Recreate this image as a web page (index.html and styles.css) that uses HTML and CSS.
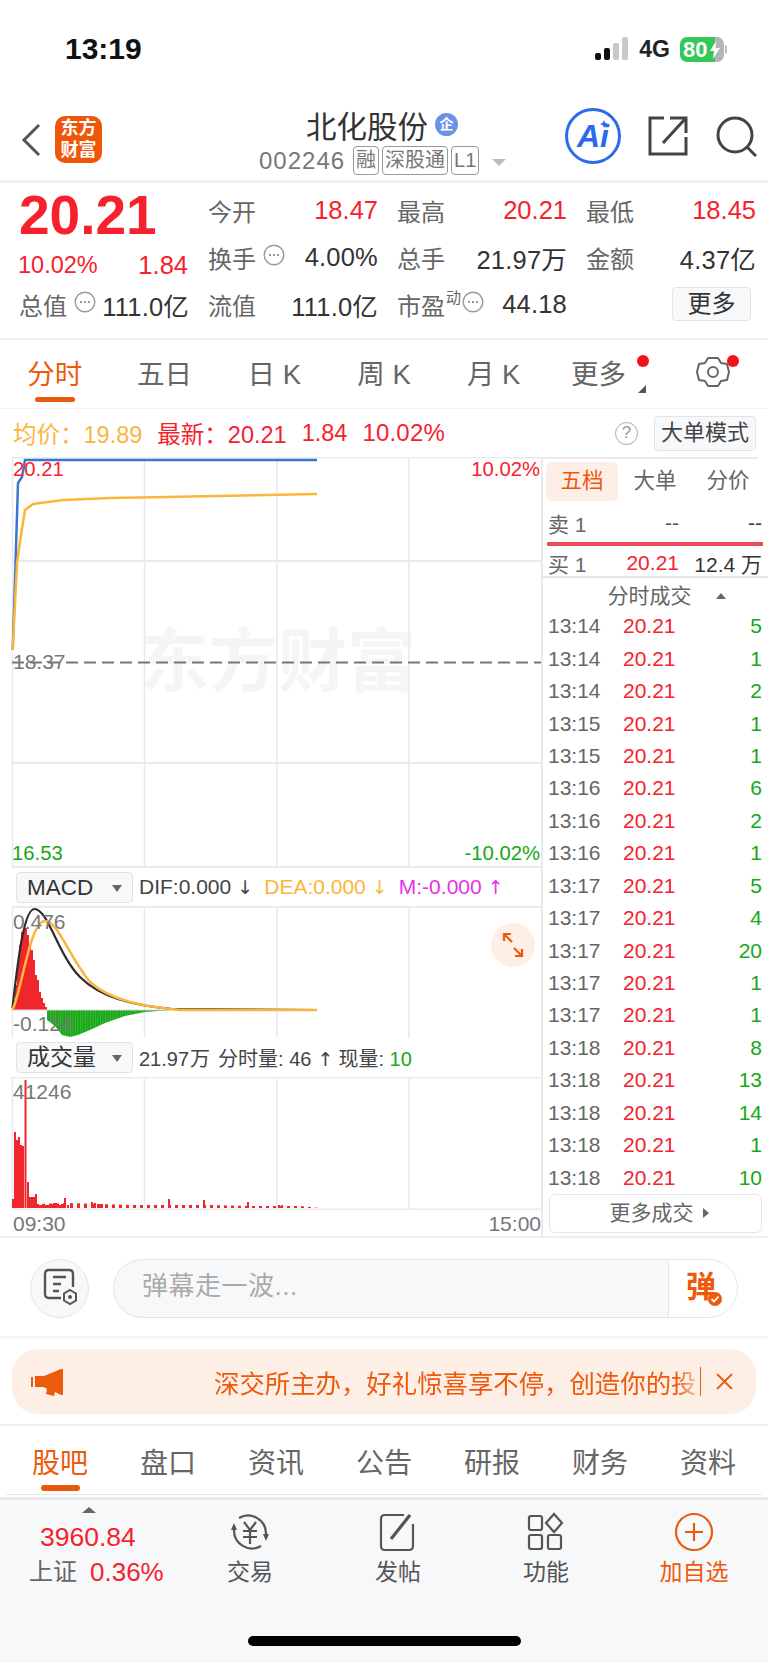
FILE: index.html
```html
<!DOCTYPE html>
<html lang="zh-CN">
<head>
<meta charset="utf-8">
<title>北化股份</title>
<link rel="stylesheet" href="styles.css">
</head>
<body>
<svg class="defs" width="0" height="0" aria-hidden="true">
  <symbol id="more" viewBox="0 0 22 22"><circle cx="11" cy="11" r="9.8" fill="none" stroke="#999" stroke-width="1.4"/><circle cx="7" cy="11" r="1" fill="#777"/><circle cx="11" cy="11" r="1" fill="#777"/><circle cx="15" cy="11" r="1" fill="#777"/></symbol>
  <pattern id="gstripe" width="2.500" height="4" patternUnits="userSpaceOnUse"><rect width="2.500" height="4" fill="#17a717"/><rect width=".6" height="4" fill="#4cbf4c"/></pattern>
  <pattern id="rstripe" width="7" height="4" patternUnits="userSpaceOnUse"><rect width="3" height="4" fill="#f0262d"/></pattern>
</svg>
<div class="page">
  <div class="status">
    <span class="time">13:19</span>
    <div class="status-right">
      <svg class="signal" width="34" height="24" viewBox="0 0 34 24"><rect x="0" y="16" width="6" height="7" rx="2" fill="#111"/><rect x="9" y="11" width="6" height="12" rx="2" fill="#111"/><rect x="18" y="6" width="6" height="17" rx="2" fill="#c8c8c8"/><rect x="27" y="0" width="6" height="23" rx="2" fill="#c8c8c8"/></svg>
      <span class="net">4G</span>
      <div class="battery"><span class="bat-text">80</span><svg class="bolt" width="10" height="18" viewBox="0 0 10 18"><path d="M6 0 0 10h4l-1 8 7-11H5.500z" fill="#fff"/></svg></div>
      <span class="bat-cap"></span>
    </div>
  </div>

  <div class="header">
    <svg class="back" width="20" height="34" viewBox="0 0 20 34"><path d="M18 2 3 17l15 15" fill="none" stroke="#555" stroke-width="3"/></svg>
    <div class="logo"><span>东方</span><span>财富</span></div>
    <div class="title-box">
      <div class="title"><span>北化股份</span><span class="qi">企</span></div>
      <div class="sub"><span class="code">002246</span><span class="tag">融</span><span class="tag">深股通</span><span class="tag">L1</span><span class="tri-down"></span></div>
    </div>
    <div class="ai"><span>Ai</span><svg class="spark" width="8" height="8" viewBox="0 0 8 8"><path d="M4 0 5.200 2.800 8 4 5.200 5.200 4 8 2.800 5.200 0 4 2.800 2.800z" fill="#2b6be8"/></svg></div>
    <svg class="share" width="40" height="40" viewBox="0 0 40 40"><path d="M16 2H2v36h36V21" fill="none" stroke="#444" stroke-width="3"/><path d="M15 27 37 3M22 2h16v15" fill="none" stroke="#444" stroke-width="3"/></svg>
    <svg class="search" width="41" height="41" viewBox="0 0 41 41"><circle cx="19" cy="19" r="17" fill="none" stroke="#444" stroke-width="3"/><path d="m31 31 9 9" stroke="#444" stroke-width="3"/></svg>
  </div>

  <div class="quote">
    <div class="cell price">20.21</div>
    <div class="cell"><span class="lb">今开</span><span class="up">18.47</span></div>
    <div class="cell"><span class="lb">最高</span><span class="up">20.21</span></div>
    <div class="cell"><span class="lb">最低</span><span class="up">18.45</span></div>
    <div class="cell chg"><span class="up chg-pct">10.02%</span><span class="up">1.84</span></div>
    <div class="cell"><span class="lb lbi">换手<svg class="mi"><use href="#more"/></svg></span><span class="val">4.00%</span></div>
    <div class="cell"><span class="lb">总手</span><span class="val">21.97万</span></div>
    <div class="cell"><span class="lb">金额</span><span class="val">4.37亿</span></div>
    <div class="cell"><span class="lb lbi">总值<svg class="mi"><use href="#more"/></svg></span><span class="val">111.0亿</span></div>
    <div class="cell"><span class="lb">流值</span><span class="val">111.0亿</span></div>
    <div class="cell"><span class="lb lbi">市盈<sup class="dyn">动</sup><svg class="mi mi-tight"><use href="#more"/></svg></span><span class="val">44.18</span></div>
    <div class="cell cell-end"><span class="more-btn">更多</span></div>
  </div>

  <div class="period-tabs">
    <div class="ptab on">分时</div>
    <div class="ptab">五日</div>
    <div class="ptab">日 K</div>
    <div class="ptab">周 K</div>
    <div class="ptab">月 K</div>
    <div class="ptab ptab-more">更多<i class="dot dot-a"></i><i class="corner"></i></div>
    <div class="ptab ptab-gear">
      <svg width="34" height="32" viewBox="0 0 34 32"><path d="M12 2h10l3 5 6 1 2 8-2 8-6 1-3 5H12l-3-5-6-1-2-8 2-8 6-1z" fill="none" stroke="#666" stroke-width="2" stroke-linejoin="round"/><circle cx="17" cy="16" r="5" fill="none" stroke="#666" stroke-width="2"/></svg>
      <i class="dot dot-b"></i>
    </div>
  </div>

  <div class="legend">
    <span class="yl">均价：19.89</span>
    <span class="up gap-a">最新：20.21</span>
    <span class="up gap-b">1.84</span>
    <span class="up gap-c">10.02%</span>
    <span class="help">?</span>
    <span class="mode-btn">大单模式</span>
  </div>

  <div class="market">
    <div class="charts">
      <svg class="main-chart" width="541" height="411" viewBox="0 457 541 411">
        <text class="wm" x="140" y="686">东方财富</text>
        <path class="gl" d="M144.500 457V868M277 457V868M409 457V868"/>
        <path class="gh" d="M12 457.500H541M12 561H541M12 763H541M12 867H541"/>
        <path class="gl" d="M12.500 457V868"/>
        <path class="dash" d="M12 662.500H541"/>
        <polyline class="l-blue" points="12.700,650 15,580 18,483 22,477 25,460 317,460"/>
        <polyline class="l-yel" points="12.700,650 17,563 20.700,537 25,510 33,504 63,500 110,498 167,497 317,494"/>
        <text class="t-up" x="13" y="476">20.21</text>
        <text class="t-up t-end" x="540" y="476">10.02%</text>
        <text class="t-gray" x="13" y="669">18.37</text>
        <text class="t-dn" x="12" y="860">16.53</text>
        <text class="t-dn t-end" x="540" y="860">-10.02%</text>
      </svg>
      <div class="ind-row">
        <span class="sel sel-en">MACD<i class="tri-sel"></i></span>
        <span class="ind-a">DIF:0.000<i class="arr">↓</i></span>
        <span class="yl ind-b">DEA:0.000<i class="arr">↓</i></span>
        <span class="mg ind-b">M:-0.000<i class="arr">↑</i></span>
      </div>
      <svg class="macd-chart" width="541" height="132" viewBox="0 906 541 132">
        <path class="gl" d="M12.500 906V1038M144.500 906V1038M277 906V1038M409 906V1038"/>
        <path class="gh" d="M12 907H541"/>
        <path class="bar-r" d="M14 1000V1010M16 985V1010M18 965V1010M20 945V1010M22 932V1010M24 930V1010M26 928V1010M28 935V1010M30 945V1010M32 950V1010M34 960V1010M36 975V1010M38 980V1010M40 992V1010M42 998V1010M44 1003V1010M46 1007V1010"/>
        <polygon class="bar-g" points="47,1010 47,1020 55,1026 62,1035 70,1037 78,1035 90,1030 105,1023 125,1016 145,1012 172,1010"/>
        <path class="gh-thin" d="M12 1010H317"/>
        <path class="l-blk" d="M12.400 1008C17 970 23 909 34.500 909C48 909 58 955 80 977C100 997 130 1005 172 1009L317 1010"/>
        <path class="l-yel" d="M12.400 1010C22 990 30 921 45 921C58 921 68 955 90 982C110 1000 140 1006 179 1010L317 1010"/>
        <text class="t-gray" x="13" y="929">0.476</text>
        <text class="t-gray" x="13" y="1031">-0.124</text>
        <circle cx="513" cy="945" r="22" fill="#fdeee6"/>
        <path class="expand" d="M504 941v-7h7M504 934l8 8M522 949v7h-7M522 956l-8-8"/>
      </svg>
      <div class="ind-row ind-row-v">
        <span class="sel">成交量<i class="tri-sel"></i></span>
        <span class="ind-a">21.97<span class="wan">万</span></span>
        <span class="ind-c">分时量: 46<i class="arr">↑</i></span>
        <span class="ind-c">现量: <span class="dn">10</span></span>
      </div>
      <svg class="vol-chart" width="541" height="133" viewBox="0 1077 541 133">
        <path class="gl" d="M12.500 1077V1210M144.500 1077V1210M277 1077V1210M409 1077V1210"/>
        <path class="gh" d="M12 1077.500H541M12 1209.500H541"/>
        <polygon class="bar-low" points="36,1208 36,1204 70,1203 100,1204 130,1205 170,1205 210,1205 250,1206 300,1206 320,1208"/>
        <path class="bar-r" d="M13 1199V1208M15 1132V1208M17 1140V1208M19 1137V1208M21 1145V1208M23 1146V1208M25.500 1080V1208M28 1182V1208M30 1197V1208M32 1197V1208M34 1197V1208M36 1194V1208M38 1204V1208M40 1205V1208M42 1205V1208M44 1205V1208M46 1205V1208M48 1205V1208M50 1204V1208M52 1204V1208M54 1203V1208M56 1203V1208M58 1204V1208M60 1205V1208M62 1204V1208M65 1198V1208M68 1205V1208M92 1202V1208M95 1203V1208M98 1204V1208M102 1204V1208M169 1199V1208M204 1200V1208M248 1202V1208M279 1205V1208M282 1205V1208"/>
        <text class="t-gray" x="13" y="1099">41246</text>
      </svg>
      <div class="axis"><span>09:30</span><span>15:00</span></div>
    </div>

    <div class="side">
      <div class="side-tabs"><span class="stab on">五档</span><span class="stab">大单</span><span class="stab">分价</span></div>
      <div class="ob ob-s"><span class="ob-l">卖 1</span><span class="ob-p">--</span><span class="ob-v">--</span></div>
      <div class="ob-line"></div>
      <div class="ob ob-b"><span class="ob-l">买 1</span><span class="ob-p up">20.21</span><span class="ob-v">12.4 万</span></div>
      <div class="tick-head">分时成交<i class="tri-up"></i></div>
      <div class="ticks">
        <div class="tk"><span>13:14</span><b>20.21</b><em>5</em></div>
        <div class="tk"><span>13:14</span><b>20.21</b><em>1</em></div>
        <div class="tk"><span>13:14</span><b>20.21</b><em>2</em></div>
        <div class="tk"><span>13:15</span><b>20.21</b><em>1</em></div>
        <div class="tk"><span>13:15</span><b>20.21</b><em>1</em></div>
        <div class="tk"><span>13:16</span><b>20.21</b><em>6</em></div>
        <div class="tk"><span>13:16</span><b>20.21</b><em>2</em></div>
        <div class="tk"><span>13:16</span><b>20.21</b><em>1</em></div>
        <div class="tk"><span>13:17</span><b>20.21</b><em>5</em></div>
        <div class="tk"><span>13:17</span><b>20.21</b><em>4</em></div>
        <div class="tk"><span>13:17</span><b>20.21</b><em>20</em></div>
        <div class="tk"><span>13:17</span><b>20.21</b><em>1</em></div>
        <div class="tk"><span>13:17</span><b>20.21</b><em>1</em></div>
        <div class="tk"><span>13:18</span><b>20.21</b><em>8</em></div>
        <div class="tk"><span>13:18</span><b>20.21</b><em>13</em></div>
        <div class="tk"><span>13:18</span><b>20.21</b><em>14</em></div>
        <div class="tk"><span>13:18</span><b>20.21</b><em>1</em></div>
        <div class="tk"><span>13:18</span><b>20.21</b><em>10</em></div>
      </div>
      <div class="more-ticks">更多成交<i class="tri-right"></i></div>
    </div>
  </div>

  <div class="danmu">
    <div class="dm-set">
      <svg width="34" height="42" viewBox="0 0 34 42"><path d="M18 30H6q-4 0-4-4V6q0-4 4-4h20q4 0 4 4v13" fill="none" stroke="#555" stroke-width="2.400"/><path d="M10 9h13M10 16h8M10 23h6" stroke="#555" stroke-width="2.400"/><path d="m27 22 6 3.500v7L27 36l-6-3.500v-7z" fill="none" stroke="#555" stroke-width="2"/><circle cx="27" cy="29" r="2" fill="#555"/></svg>
    </div>
    <div class="dm-input">
      <span class="dm-ph">弹幕走一波...</span>
      <span class="dm-send">弹<i class="dm-check"><svg width="14" height="14" viewBox="0 0 14 14"><path d="m3.500 7 2.500 2.500 4.500-5" fill="none" stroke="#fff" stroke-width="1.800"/></svg></i></span>
    </div>
  </div>

  <div class="banner-wrap">
    <div class="banner">
      <svg class="horn" width="32" height="28" viewBox="0 0 32 28"><path d="M0 9h2v10H0zM4 8h9L30 1h2v26h-2l-6-3-1 4-8-2 1-5-3-2H4z" fill="#ee5a0c"/></svg>
      <div class="marquee"><span>深交所主办，好礼惊喜享不停，创造你的投</span></div>
      <i class="caret"></i>
      <svg class="close" width="17" height="17" viewBox="0 0 17 17"><path d="m1 1 15 15M16 1 1 16" stroke="#ee5a0c" stroke-width="1.800"/></svg>
    </div>
  </div>

  <div class="news-tabs">
    <div class="ntab on">股吧</div>
    <div class="ntab">盘口</div>
    <div class="ntab">资讯</div>
    <div class="ntab">公告</div>
    <div class="ntab">研报</div>
    <div class="ntab">财务</div>
    <div class="ntab">资料</div>
  </div>

  <div class="bottom">
    <div class="nav">
      <div class="nav-idx">
        <i class="tri-idx"></i>
        <span class="up idx-val">3960.84</span>
        <span class="idx-row"><span class="lb">上证</span><span class="up idx-pct">0.36%</span></span>
      </div>
      <div class="nav-item">
        <svg width="44" height="40" viewBox="0 0 44 40"><path d="M11 6A18 18 0 0 1 38 22M33 34A18 18 0 0 1 6 18" fill="none" stroke="#555" stroke-width="2.200"/><path d="m38 29 3-7h-6zM6 11l3 7H3z" fill="#555"/><path d="m16 10 6 8 6-8M15 19h14M15 25h14M22 18v14" fill="none" stroke="#555" stroke-width="2.200"/></svg>
        <span>交易</span>
      </div>
      <div class="nav-item">
        <svg width="40" height="40" viewBox="0 0 40 40"><path d="M26 3H7Q3 3 3 7v27q0 4 4 4h24q4 0 4-4V12" fill="none" stroke="#555" stroke-width="2.200"/><path d="M13 27 32 3" fill="none" stroke="#555" stroke-width="3.200"/></svg>
        <span>发帖</span>
      </div>
      <div class="nav-item">
        <svg width="38" height="40" viewBox="0 0 38 40"><rect x="2" y="4" width="13" height="14" rx="2" fill="none" stroke="#555" stroke-width="2.200"/><rect x="2" y="23" width="13" height="14" rx="2" fill="none" stroke="#555" stroke-width="2.200"/><rect x="21" y="23" width="13" height="14" rx="2" fill="none" stroke="#555" stroke-width="2.200"/><path d="m27 2 8 9-8 9-8-9z" fill="none" stroke="#555" stroke-width="2.200"/></svg>
        <span>功能</span>
      </div>
      <div class="nav-item nav-add">
        <svg width="40" height="40" viewBox="0 0 40 40"><circle cx="20" cy="20" r="18" fill="none" stroke="#ee5a0c" stroke-width="2.200"/><path d="M20 11v18M11 20h18" stroke="#ee5a0c" stroke-width="2.200"/></svg>
        <span>加自选</span>
      </div>
    </div>
    <div class="home-bar"></div>
  </div>
</div>
</body>
</html>
```
FILE: styles.css
```css
* { box-sizing: border-box; }
html, body { margin: 0; padding: 0; background: #fff; }
body { font-family: "Liberation Sans", "Noto Sans CJK SC", sans-serif; color: #333; }
i, em { font-style: normal; }
b { font-weight: normal; }
.defs { position: absolute; }
.page { width: 768px; height: 1663px; overflow: hidden; display: flex; flex-direction: column; }
.up { color: #f5222d; }
.dn { color: #17a717; }
.yl { color: #fbb53c; }
.mg { color: #e633e6; }
.lb { color: #666; }
.val { color: #333; }

/* status bar */
.status { height: 100px; flex: none; display: flex; align-items: flex-start; justify-content: space-between; padding: 32px 41px 0 65px; }
.time { font-size: 30px; font-weight: bold; line-height: 34px; color: #111; }
.status-right { display: flex; align-items: center; height: 34px; }
.signal { display: block; margin-right: 10px; }
.net { font-size: 23px; font-weight: bold; color: #222; margin-right: 10px; }
.battery { width: 44px; height: 25px; border-radius: 7px; background: linear-gradient(90deg, #34c759 0 80%, #b5b5b5 80%); position: relative; color: #fff; font-size: 22px; font-weight: bold; line-height: 25px; padding-left: 3px; }
.bolt { position: absolute; right: 4px; top: 4px; }
.bat-cap { width: 2px; height: 9px; background: #bbb; border-radius: 0 2px 2px 0; margin-left: 1px; }

/* header */
.header { height: 80px; flex: none; display: flex; align-items: center; position: relative; padding-left: 21px; }
.back { display: block; flex: none; margin-right: 14px; }
.logo { width: 47px; height: 47px; border-radius: 10px; background: #f0560a; color: #fff; font-size: 18px; line-height: 22px; font-weight: bold; display: flex; flex-direction: column; align-items: center; justify-content: center; flex: none; position: relative; top: -1px; }
.title-box { width: 420px; flex: none; padding-left: 157px; }
.title { display: flex; align-items: center; height: 40px; font-size: 30.500px; color: #333; padding-left: 47px; white-space: nowrap; }
.qi { width: 23px; height: 23px; border-radius: 50%; background: #6a93e8; color: #fff; font-size: 14px; line-height: 23px; text-align: center; margin-left: 7px; font-weight: bold; }
.sub { display: flex; align-items: center; height: 30px; margin-top: 1px; white-space: nowrap; }
.code { font-size: 24px; color: #777; margin-right: 8px; letter-spacing: 1px; }
.tag { height: 29px; border: 1px solid #999; border-radius: 4px; padding: 0 2px; font-size: 20px; line-height: 27px; color: #777; margin-right: 3px; }
.tri-down { width: 0; height: 0; border: 7px solid transparent; border-top: 7px solid #bbb; border-bottom: 0; margin-left: 10px; margin-top: 3px; }
.ai { position: absolute; left: 565px; top: 8px; width: 56px; height: 56px; border: 3px solid #2b6be8; border-radius: 50%; color: #2b6be8; font-size: 32px; font-weight: bold; font-style: italic; text-align: center; line-height: 50px; }
.spark { position: absolute; right: 10px; top: 9px; }
.share { position: absolute; left: 648px; top: 16px; }
.search { position: absolute; left: 716px; top: 16px; }

/* quote */
.quote { height: 160px; flex: none; border-top: 3px solid #f0f0f0; border-bottom: 2px solid #f2f2f2; padding: 4px 13px 0 19px; display: grid; grid-template-columns: repeat(4, 170px); grid-auto-rows: 47px; column-gap: 19px; font-size: 24px; }
.quote .up { font-size: 25.500px; }
.quote .val { font-size: 25.500px; letter-spacing: .2px; }
.cell { display: flex; align-items: center; justify-content: space-between; }
.price { font-size: 55px; font-weight: bold; color: #f5222d; line-height: 54px; position: relative; top: 4px; }
.chg { position: relative; top: 8px; left: -1px; }
.quote .chg-pct { font-size: 23.500px; }
.lbi { display: inline-flex; align-items: flex-start; }
.mi { width: 22px; height: 22px; margin-left: 7px; margin-top: 4px; }
.mi-tight { margin-left: 0; }
.dyn { font-size: 15px; color: #666; line-height: 1; margin: 3px 1px 0 1px; vertical-align: baseline; }
.cell-end { justify-content: flex-end; padding-right: 5px; }
.more-btn { width: 79px; height: 34px; border: 1px solid #e4e4e8; border-radius: 4px; background: #f7f8fa; text-align: center; line-height: 31px; font-size: 24px; color: #333; position: relative; top: -1px; }

/* period tabs */
.period-tabs { height: 69px; flex: none; border-bottom: 1px solid #f0f0f0; display: grid; grid-template-columns: repeat(7, 1fr); }
.ptab { display: flex; align-items: center; justify-content: center; font-size: 27.500px; color: #666; position: relative; padding-bottom: 4px; }
.ptab.on { color: #ee5a0c; }
.ptab.on::after { content: ""; position: absolute; left: 35px; width: 40px; height: 5px; top: 57px; border-radius: 3px; background: #e8590c; }
.ptab-more { left: -5px; }
.dot { position: absolute; width: 12px; height: 12px; border-radius: 50%; background: #f5101c; }
.dot-a { top: 15px; right: 4px; }
.dot-b { top: 15px; left: 69px; }
.corner { position: absolute; top: 45px; right: 7px; width: 0; height: 0; border-bottom: 8px solid #555; border-left: 8px solid transparent; }
.ptab-gear svg { display: block; }

/* legend */
.legend { height: 48px; flex: none; display: flex; align-items: center; padding: 0 12px 0 13px; font-size: 23.500px; }
.gap-a { margin-left: 15px; }
.gap-b { margin-left: 15px; }
.gap-c { margin-left: 15px; font-size: 24px; letter-spacing: .2px; }
.help { width: 23px; height: 23px; margin-left: auto; border: 1.500px solid #aaa; border-radius: 50%; font-size: 17px; color: #999; text-align: center; line-height: 20px; margin-right: 16px; }
.mode-btn { width: 102px; height: 35px; border: 1px solid #e4e4e8; border-radius: 4px; background: #f7f8fa; color: #444; font-size: 22px; text-align: center; line-height: 32px; }

/* charts */
.market { height: 781px; flex: none; display: flex; border-bottom: 2px solid #eceef2; }
.charts { width: 541px; flex: none; display: flex; flex-direction: column; }
.charts svg { display: block; flex: none; }
.gl { stroke: #e6e9f2; stroke-width: 1.500; fill: none; }
.gh { stroke: #e9ebf1; stroke-width: 2; fill: none; }
.gh-thin { stroke: #d7d9dc; stroke-width: 1; fill: none; }
.dash { stroke: #777; stroke-width: 2; stroke-dasharray: 12 6; fill: none; }
.l-blue { stroke: #3a78cc; stroke-width: 2.500; fill: none; }
.l-yel { stroke: #fbb53c; stroke-width: 2.500; fill: none; }
.l-blk { stroke: #2c2c2c; stroke-width: 2.200; fill: none; }
.bar-r { stroke: #f0262d; stroke-width: 2; fill: none; }
.bar-low { fill: url(#rstripe); }
.bar-g { fill: url(#gstripe); }
.expand { stroke: #ee5a0c; stroke-width: 2.200; fill: none; }
.wm { font-size: 69px; font-weight: bold; fill: #f5f5f5; }
.t-up { font-size: 20.300px; fill: #f5222d; }
.t-dn { font-size: 20.300px; fill: #17a717; }
.t-gray { font-size: 21px; fill: #777; }
.t-end { text-anchor: end; }
.ind-row { height: 38px; flex: none; display: flex; align-items: center; padding-left: 16px; font-size: 21px; color: #444; white-space: nowrap; }
.ind-row-v { height: 39px; font-size: 20px; }
.arr { font-family: "DejaVu Sans", sans-serif; font-size: 19px; display: inline-block; width: 13px; margin-left: 6px; text-align: center; line-height: 1; }
.wan { margin-left: 1px; }
.sel { width: 117px; height: 31px; border: 1px solid #e0e2e8; border-radius: 4px; background: #f7f8fa; color: #333; font-size: 23px; line-height: 29px; padding-left: 10px; margin-right: 6px; position: relative; }
.sel-en { font-size: 22.500px; }
.tri-sel { position: absolute; right: 10px; top: 12px; width: 0; height: 0; border: 5px solid transparent; border-top: 7px solid #666; border-bottom: 0; }
.ind-b { margin-left: 14px; }
.ind-c { margin-left: 8px; }
.axis { height: 28px; flex: none; display: flex; justify-content: space-between; align-items: center; padding-left: 13px; font-size: 21px; color: #777; }

/* right panel */
.side { flex: 1; border-left: 2px solid #e6e9f0; display: flex; flex-direction: column; min-width: 0; }
.side::before { content: ""; display: block; flex: none; height: 2px; width: 215px; background: #e9ebf1; }
.side-tabs { height: 46px; flex: none; margin-top: 3px; padding-left: 3px; display: flex; }
.stab { width: 72px; height: 39px; line-height: 38px; text-align: center; font-size: 21.500px; color: #666; border-radius: 6px; margin-right: 1px; }
.stab.on { background: #fdeee6; color: #f0560a; }
.ob { display: flex; align-items: center; font-size: 21px; color: #555; padding-left: 5px; flex: none; }
.ob-s { height: 30px; }
.ob-b { height: 29px; border-bottom: 2px solid #e3e5e9; }
.ob-l { width: 66px; flex: none; color: #666; }
.ob-p { width: 65px; flex: none; text-align: right; }
.ob-v { width: 83px; flex: none; text-align: right; color: #333; }
.ob-line { height: 4px; flex: none; background: #e94c55; margin: 4px 5px 3px 4px; border-radius: 1px; }
.tick-head { height: 32px; flex: none; text-align: center; font-size: 21px; color: #666; line-height: 35px; padding-right: 12px; position: relative; }
.tri-up { position: absolute; left: 173px; top: 15px; width: 0; height: 0; border: 5px solid transparent; border-bottom: 6px solid #666; border-top: 0; }
.ticks { display: flex; flex-direction: column; flex: none; }
.tk { height: 32.450px; display: flex; align-items: center; padding-left: 5px; font-size: 21px; color: #666; }
.tk span { width: 75px; flex: none; }
.tk b { width: 60px; flex: none; color: #f5222d; }
.tk em { flex: 1; text-align: right; color: #17a717; padding-right: 6px; }
.more-ticks { height: 39px; flex: none; margin: 0 6px; border: 1px solid #e6e6ea; border-radius: 6px; text-align: center; font-size: 21px; line-height: 36px; color: #666; position: relative; padding-right: 8px; }
.tri-right { position: absolute; left: 153px; top: 13px; width: 0; height: 0; border: 5px solid transparent; border-left: 6px solid #666; border-right: 0; }

/* danmu */
.danmu { height: 101px; flex: none; border-bottom: 3px solid #f5f5f5; display: flex; align-items: flex-start; padding: 21px 30px 0; gap: 24px; }
.dm-set { width: 59px; height: 59px; flex: none; border: 1px solid #e3e4e8; border-radius: 50%; background: #f7f8fa; display: flex; align-items: center; justify-content: center; }
.dm-input { flex: 1; height: 59px; border: 1.500px solid #e3e4e8; border-radius: 30px; background: #f7f8fa; display: flex; align-items: stretch; justify-content: space-between; overflow: hidden; }
.dm-ph { font-size: 26px; color: #aaa; line-height: 52px; padding-left: 28px; letter-spacing: .5px; }
.dm-send { width: 69px; flex: none; background: #fff; border-left: 1.500px solid #e3e4e8; color: #ee5a0c; font-size: 30px; font-weight: bold; line-height: 54px; padding-left: 17px; position: relative; }
.dm-check { position: absolute; left: 39px; top: 32px; width: 14px; height: 14px; border-radius: 50%; background: #ee5a0c; display: block; }
.dm-check svg { display: block; }

/* banner */
.banner-wrap { height: 87px; flex: none; padding: 10px 12px 0; border-bottom: 2px solid #eee; }
.banner { height: 65px; border-radius: 26px; background: #fdeee6; display: flex; align-items: center; padding-left: 19px; position: relative; }
.horn { flex: none; }
.marquee { width: 482px; margin-left: 151px; overflow: hidden; white-space: nowrap; font-size: 25.400px; color: #ee5a0c; -webkit-mask-image: linear-gradient(90deg, #000 96%, rgba(0,0,0,.3)); mask-image: linear-gradient(90deg, #000 96%, rgba(0,0,0,.3)); }
.caret { width: 1px; height: 29px; background: #ee5a0c; margin-left: 4px; flex: none; }
.close { margin-left: 15px; flex: none; }

/* news tabs */
.news-tabs { height: 69px; flex: none; display: grid; grid-template-columns: repeat(7, 108px); margin: 0 6px; border-bottom: 1px solid #e8e8e8; }
.ntab { display: flex; align-items: center; justify-content: center; font-size: 28px; color: #666; position: relative; padding-top: 2px; }
.ntab.on { color: #ee5a0c; }
.ntab.on::after { content: ""; position: absolute; left: 35px; width: 39px; height: 6px; top: 59px; border-radius: 3px; background: #e8590c; }

/* bottom */
.bottom { flex: 1; background: #f7f8fa; border-top: 3px solid #e9eaee; position: relative; margin-top: 2px; }
.nav { display: grid; grid-template-columns: 155px repeat(4, 148px); padding-left: 21px; height: 100px; }
.nav-item { display: flex; flex-direction: column; align-items: center; padding-top: 12px; font-size: 23px; color: #555; }
.nav-item svg { display: block; height: 40px; }
.nav-item span { margin-top: 5px; line-height: 30px; }
.nav-add { color: #ee5a0c; }
.nav-idx { display: flex; flex-direction: column; align-items: flex-start; position: relative; padding-top: 22px; }
.tri-idx { position: absolute; top: 7px; left: 61px; width: 0; height: 0; border: 7px solid transparent; border-bottom: 6px solid #666; border-top: 0; }
.idx-val { font-size: 26.500px; line-height: 30px; margin-left: 19px; }
.idx-row { margin-top: 5px; margin-left: 8px; font-size: 24px; line-height: 30px; display: flex; gap: 13px; white-space: nowrap; }
.idx-pct { font-size: 26px; }
.home-bar { position: absolute; left: 248px; top: 136px; width: 273px; height: 10px; border-radius: 5px; background: #000; }
```
